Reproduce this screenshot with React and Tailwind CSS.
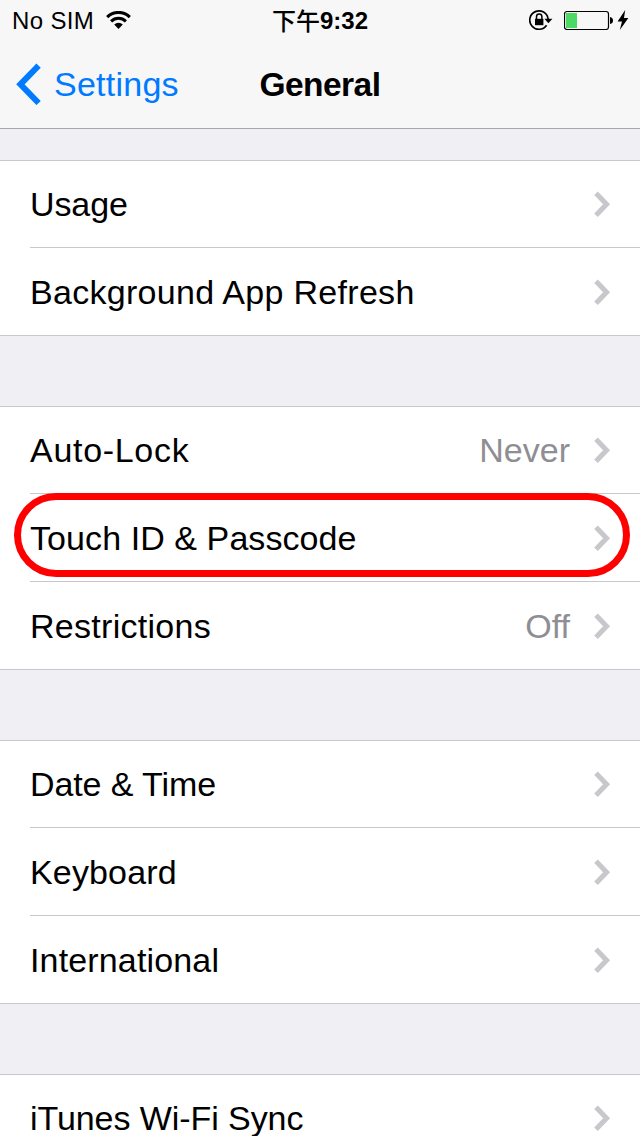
const groups = [
  [
    { label: "Usage", tracking: "tracking-[-0.1px]" },
    { label: "Background App Refresh", tracking: "tracking-[0.3px]" },
  ],
  [
    { label: "Auto-Lock", value: "Never", tracking: "tracking-[0.7px]" },
    { label: "Touch ID & Passcode", tracking: "tracking-[0.08px]", marked: true },
    { label: "Restrictions", value: "Off", tracking: "tracking-[0.28px]" },
  ],
  [
    { label: "Date & Time", tracking: "tracking-[-0.1px]" },
    { label: "Keyboard", tracking: "tracking-[0.15px]" },
    { label: "International", tracking: "tracking-[0.15px]" },
  ],
  [{ label: "iTunes Wi-Fi Sync", tracking: "tracking-[-0.07px]" }],
];

function Chevron() {
  return (
    <svg className="h-[26px] w-[17px] shrink-0" viewBox="0 0 17 26" fill="none">
      <path d="M2 2.3 L12.6 13.3 L2 24.3" stroke="#c7c7cc" strokeWidth="5" />
    </svg>
  );
}

function Row({ item, first }) {
  return (
    <div className={`relative flex bg-white pl-[30px] ${first ? "h-[87px] border-t border-[#c8c7cc]" : "h-[88px]"}`}>
      <div
        className={`flex grow items-center justify-between pr-[29px] ${first ? "" : "border-t border-[#c8c7cc]"}`}
      >
        <span className={`whitespace-nowrap leading-10 ${item.tracking}`}>{item.label}</span>
        <span className="flex items-center gap-6">
          {item.value && <span className="leading-10 text-[#8e8e93]">{item.value}</span>}
          <Chevron />
        </span>
      </div>
      {item.marked && (
        <div className="absolute top-0 left-[14px] h-[84px] w-[616px] rounded-full border-[7px] border-[#ff0000]" />
      )}
    </div>
  );
}

function StatusBar() {
  return (
    <div className="grid h-10 grid-cols-[1fr_auto_1fr] items-center text-2xl">
      <div className="flex h-10 items-center gap-3 pl-3">
        <span className="pt-[2px] leading-9 tracking-[0.35px]">No SIM</span>
        <svg className="h-[18px] w-[25px]" viewBox="0 0 25 18" fill="none" stroke="#000">
          <path d="M1.2 6.1 A16.2 16.2 0 0 1 23.8 6.1" strokeWidth="3.2" />
          <path d="M5.1 10.3 A10.7 10.7 0 0 1 19.9 10.3" strokeWidth="3" />
          <path d="M8.2 13.4 A6.2 6.2 0 0 1 16.8 13.4 L12.5 18 Z" fill="#000" stroke="none" />
        </svg>
      </div>
      <span className="flex h-10 items-center leading-9">
        <span className="font-['Noto_Sans_CJK_TC',sans-serif] font-medium">下午</span>
        <span className="pt-[2px] font-bold">9:32</span>
      </span>
      <div className="flex items-center justify-end pr-[11px]">
        <svg className="h-[22px] w-[24px]" viewBox="0 0 24 22" fill="none" stroke="#000">
          <path d="M17.6 16.2 A9.2 9.2 0 1 1 19.1 10" strokeWidth="1.7" />
          <path d="M15.4 9.8 H23.4 L19.4 14.2 Z" fill="#000" stroke="none" />
          <rect x="6" y="9.8" width="8.4" height="6.4" fill="#000" stroke="none" />
          <path d="M7.5 10 V7.8 A2.7 2.7 0 0 1 12.9 7.8 V10" strokeWidth="1.5" />
        </svg>
        <svg className="ml-[11px] h-5 w-[50px]" viewBox="0 0 50 20">
          <rect x="0.5" y="1.5" width="44" height="18" rx="2.5" fill="none" stroke="#000" strokeWidth="1.2" />
          <rect x="2" y="3" width="11" height="15" fill="#4cd964" />
          <path d="M46 7 Q49 7.5 49 10.5 T46 14 Z" fill="#000" />
        </svg>
        <svg className="ml-[3px] h-5 w-[12px]" viewBox="0 0 12 20">
          <path d="M8.2 0 L0.6 11.4 H5 L2.8 20 L11.4 8 H7 Z" fill="#000" />
        </svg>
      </div>
    </div>
  );
}

export default function App() {
  return (
    <div className="flex h-[1136px] w-[640px] flex-col overflow-hidden bg-[#efeff4] font-['Liberation_Sans',Arial,sans-serif] text-[34px] text-black">
      <header className="h-[129px] shrink-0 border-b border-[#a7a7ac] bg-[#f7f7f7]">
        <StatusBar />
        <nav className="grid h-[88px] grid-cols-[1fr_auto_1fr] items-center">
          <a className="flex items-center gap-[13px] pl-4 text-[#007aff]">
            <svg className="h-[42px] w-[25px]" viewBox="0 0 25 42" fill="none">
              <path d="M22.6 2.6 L4.4 21.3 L22.6 40" stroke="#007aff" strokeWidth="6" />
            </svg>
            <span className="leading-10 tracking-[0.25px]">Settings</span>
          </a>
          <h1 className="pt-[2px] text-[33.5px] leading-10 font-bold tracking-[-0.55px]">General</h1>
        </nav>
      </header>
      <main className="flex flex-col gap-[70px] pt-[31px]">
        {groups.map((items, g) => (
          <section key={g} className="shrink-0 border-b border-[#c8c7cc]">
            {items.map((item, i) => (
              <Row key={item.label} item={item} first={i === 0} />
            ))}
          </section>
        ))}
      </main>
    </div>
  );
}
